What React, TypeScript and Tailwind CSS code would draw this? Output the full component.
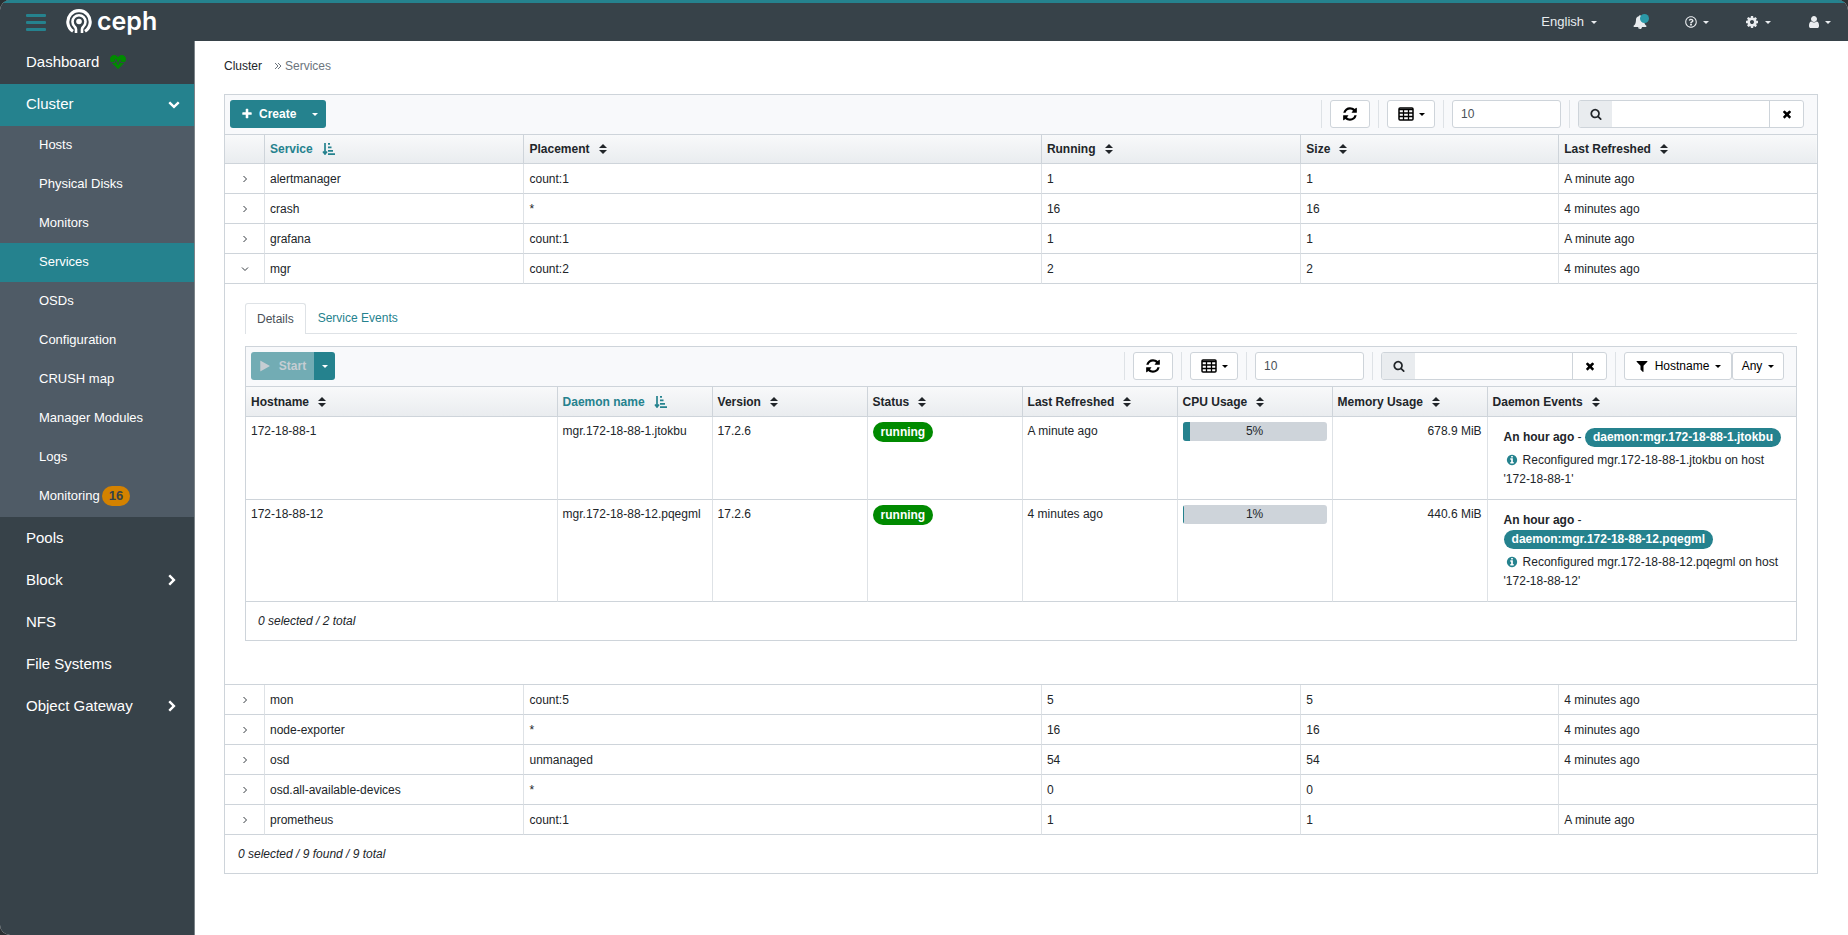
import { Fragment, useState } from "react";
import type { ReactNode } from "react";
import { FaRegQuestionCircle, FaHeartbeat } from "react-icons/fa";

const icons = {
  refresh:
    "M1639 1056q0 5-1 7-64 268-268 434.500t-478 166.500q-146 0-282.500-55t-243.500-157l-129 129q-19 19-45 19t-45-19-19-45v-448q0-26 19-45t45-19h448q26 0 45 19t19 45-19 45l-137 137q71 66 161 102t187 36q134 0 250-65t186-179q11-17 53-117 8-23 30-23h192q13 0 22.500 9.500t9.500 22.500zm25-800v448q0 26-19 45t-45 19h-448q-26 0-45-19t-19-45 19-45l138-138q-148-137-349-137-134 0-250 65t-186 179q-11 17-53 117-8 23-30 23h-199q-13 0-22.500-9.500t-9.500-22.500v-7q65-268 270-434.500t480-166.500q146 0 284 55.500t245 156.500l130-129q19-19 45-19t45 19 19 45z",
  search:
    "M1216 832q0-185-131.500-316.500t-316.500-131.500-316.500 131.500-131.500 316.500 131.500 316.500 316.500 131.500 316.500-131.500 131.500-316.500zm512 832q0 52-38 90t-90 38q-54 0-90-38l-343-342q-179 124-399 124-143 0-273.500-55.500t-225-150-150-225-55.500-273.500 55.500-273.500 150-225 225-150 273.500-55.500 273.500 55.500 225 150 150 225 55.500 273.500q0 220-124 399l343 343q37 37 37 90z",
  times:
    "M1490 1322q0 40-28 68l-136 136q-28 28-68 28t-68-28l-294-294-294 294q-28 28-68 28t-68-28l-136-136q-28-28-28-68t28-68l294-294-294-294q-28-28-28-68t28-68l136-136q28-28 68-28t68 28l294 294 294-294q28-28 68-28t68 28l136 136q28 28 28 68t-28 68l-294 294 294 294q28 28 28 68z",
  plus:
    "M1600 736v192q0 40-28 68t-68 28h-416v416q0 40-28 68t-68 28h-192q-40 0-68-28t-28-68v-416h-416q-40 0-68-28t-28-68v-192q0-40 28-68t68-28h416v-416q0-40 28-68t68-28h192q40 0 68 28t28 68v416h416q40 0 68 28t28 68z",
  play: "M1576 927l-1328 738q-23 13-39.500 3t-16.500-36v-1472q0-26 16.500-36t39.500 3l1328 738q23 13 23 31t-23 31z",
  filter:
    "M1595 295q17 41-14 70l-493 493v742q0 42-39 59-13 5-25 5-27 0-45-19l-256-256q-19-19-19-45v-486l-493-493q-31-29-14-70 17-39 59-39h1280q42 0 59 39z",
  cog: "M1152 896q0-106-75-181t-181-75-181 75-75 181 75 181 181 75 181-75 75-181zm512-109v222q0 12-8 23t-20 13l-185 28q-19 54-39 91 35 50 107 138 10 12 10 25t-9 23q-27 37-99 108t-94 71q-12 0-26-9l-138-108q-44 23-91 38-16 136-29 186-7 28-36 28h-222q-14 0-24.500-8.500t-11.500-21.500l-28-184q-49-16-90-37l-141 107q-10 9-25 9-14 0-25-11-126-114-165-168-7-10-7-23 0-12 8-23 15-21 51-66.500t54-70.500q-27-50-41-99l-183-27q-13-2-21-12.500t-8-23.500v-222q0-12 8-23t19-13l186-28q14-46 39-92-40-57-107-138-10-12-10-24 0-10 9-23 26-36 98.500-107.500t94.500-71.500q13 0 26 10l138 107q44-23 91-38 16-136 29-186 7-28 36-28h222q14 0 24.500 8.500t11.500 21.500l28 184q49 16 90 37l142-107q9-9 24-9 13 0 25 10 129 119 165 170 7 8 7 22 0 12-8 23-15 21-51 66.500t-54 70.500q26 50 41 98l183 28q13 2 21 12.500t8 23.500z",
  user: "M1536 1399q0 109-62.500 187t-150.500 78h-854q-88 0-150.500-78t-62.500-187q0-85 8.500-160.500t31.500-152 58.500-131 94-89 134.500-34.500q131 128 313 128t313-128q76 0 134.500 34.500t94 89 58.500 131 31.500 152 8.500 160.500zm-256-887q0 159-112.500 271.500t-271.500 112.500-271.500-112.500-112.500-271.500 112.500-271.500 271.500-112.500 271.500 112.500 112.500 271.500z",
  bell: "M912 1696q0-16-16-16-59 0-101.500-42.500t-42.500-101.500q0-16-16-16t-16 16q0 73 51.500 124.500t124.500 51.500q16 0 16-16zm816-288q0 52-38 90t-90 38h-448q0 106-75 181t-181 75-181-75-75-181h-448q-52 0-90-38t-38-90q50-42 91-88t85-119.500 74.500-158.500 50-206 19.500-260q0-152 117-282.500t307-158.500q-8-19-8-39 0-40 28-68t68-28 68 28 28 68q0 20-8 39 190 28 307 158.500t117 282.500q0 139 19.500 260t50 206 74.500 158.500 85 119.500 91 88z",
  info: "M1152 1376v-160q0-14-9-23t-23-9h-96v-512q0-14-9-23t-23-9h-320q-14 0-23 9t-9 23v160q0 14 9 23t23 9h96v320h-96q-14 0-23 9t-9 23v160q0 14 9 23t23 9h448q14 0 23-9t9-23zm-128-896v-160q0-14-9-23t-23-9h-192q-14 0-23 9t-9 23v160q0 14 9 23t23 9h192q14 0 23-9t9-23zm640 416q0 209-103 385.500t-279.500 279.500-385.500 103-385.500-103-279.500-279.500-103-385.500 103-385.500 279.500-279.500 385.500-103 385.500 103 279.500 279.500 103 385.500z",
  chevron:
    "M1683 808l-742 741q-19 19-45 19t-45-19l-742-741q-19-19-19-45.500t19-45.500l166-165q19-19 45-19t45 19l531 531 531-531q19-19 45-19t45 19l166 165q19 19 19 45.500t-19 45.500z",
};

const Icon = ({ name, className = "size-3" }: { name: keyof typeof icons; className?: string }) => (
  <svg viewBox="0 0 1792 1792" fill="currentColor" className={`shrink-0 ${className}`} aria-hidden="true">
    <path d={icons[name]} />
  </svg>
);

const TableIcon = () => (
  <svg viewBox="0 0 16 14" className="h-[14px] w-4 shrink-0" aria-hidden="true">
    <rect x="1" y="1" width="14" height="12" rx="1" fill="none" stroke="currentColor" strokeWidth="1.500" />
    <path d="M1 2.500h14M1 6h14M1 9.500h14M5.500 2v11M10.500 2v11" stroke="currentColor" strokeWidth="1.300" />
  </svg>
);

const SortIcon = () => (
  <svg viewBox="0 0 8 10" fill="currentColor" className="h-[10px] w-2 shrink-0" aria-hidden="true">
    <path d="M4 0l4 4H0zM4 10L0 6h8z" />
  </svg>
);

const SortAscIcon = () => (
  <svg viewBox="0 0 13 12" fill="none" stroke="currentColor" className="h-3 w-[13px] shrink-0" aria-hidden="true">
    <path d="M3 0v11M1 8.500l2 2.500 2-2.500" strokeWidth="1.700" />
    <path d="M6 .800h2M6 4.300h3.500M6 7.800h5M6 11.200h7" strokeWidth="1.700" />
  </svg>
);

const Caret = () => (
  <svg viewBox="0 0 6 3" fill="currentColor" className="h-[3px] w-[6px] shrink-0" aria-hidden="true">
    <path d="M0 0h6L3 3z" />
  </svg>
);

const Angle = ({ open }: { open: boolean }) => (
  <svg viewBox="0 0 8 8" fill="none" stroke="#343a40" className={`size-2 ${open ? "rotate-90" : ""}`} aria-hidden="true">
    <path d="M2.500 1l3 3-3 3" />
  </svg>
);

const CephLogo = () => (
  <svg viewBox="0 0 26 26" fill="none" stroke="currentColor" className="size-[26px]" aria-hidden="true">
    <path d="M7 23.300A11.200 11.200 0 1 1 19 23.300" strokeWidth="3.100" />
    <path d="M10 25v-3.800q0-1.500-1.500-2.800A6.500 6.500 0 1 1 17.500 18.400q-1.500 1.300-1.500 2.800v3.800" strokeWidth="2.600" />
    <circle cx="13" cy="13.500" r="2.800" fill="currentColor" stroke="none" />
  </svg>
);

const clusterItems = [
  "Hosts",
  "Physical Disks",
  "Monitors",
  "Services",
  "OSDs",
  "Configuration",
  "CRUSH map",
  "Manager Modules",
  "Logs",
  "Monitoring",
];

const bottomItems = [
  { label: "Pools" },
  { label: "Block", children: true },
  { label: "NFS" },
  { label: "File Systems" },
  { label: "Object Gateway", children: true },
];

const services = [
  { name: "alertmanager", placement: "count:1", running: 1, size: 1, refreshed: "A minute ago" },
  { name: "crash", placement: "*", running: 16, size: 16, refreshed: "4 minutes ago" },
  { name: "grafana", placement: "count:1", running: 1, size: 1, refreshed: "A minute ago" },
  { name: "mgr", placement: "count:2", running: 2, size: 2, refreshed: "4 minutes ago" },
  { name: "mon", placement: "count:5", running: 5, size: 5, refreshed: "4 minutes ago" },
  { name: "node-exporter", placement: "*", running: 16, size: 16, refreshed: "4 minutes ago" },
  { name: "osd", placement: "unmanaged", running: 54, size: 54, refreshed: "4 minutes ago" },
  { name: "osd.all-available-devices", placement: "*", running: 0, size: 0, refreshed: "" },
  { name: "prometheus", placement: "count:1", running: 1, size: 1, refreshed: "A minute ago" },
];

const daemons = [
  { host: "172-18-88-1", name: "mgr.172-18-88-1.jtokbu", refreshed: "A minute ago", cpu: 5, memory: "678.9 MiB" },
  { host: "172-18-88-12", name: "mgr.172-18-88-12.pqegml", refreshed: "4 minutes ago", cpu: 1, memory: "440.6 MiB" },
];

const Header = () => (
  <header className="flex h-[41px] items-center border-t-[3px] border-[#25828e] bg-[#374249] text-[13px] text-[#e9ecef]">
    <button aria-label="Toggle navigation" className="ml-[26px] flex w-5 flex-col gap-1 text-[#25828e]">
      <span className="h-[3px] rounded-[1px] bg-current" />
      <span className="h-[3px] rounded-[1px] bg-current" />
      <span className="h-[3px] rounded-[1px] bg-current" />
    </button>
    <a href="#" className="ml-5 flex items-center gap-[5px] pb-[2px] text-white">
      <CephLogo />
      <span className="font-['Inter',sans-serif] text-[25px] leading-7 font-semibold">ceph</span>
    </a>
    <div className="ml-auto flex items-center pr-[17px]">
      <button className="flex items-center gap-[7px]">
        English <Caret />
      </button>
      <button aria-label="Notifications" className="relative ml-9">
        <Icon name="bell" className="size-[14px]" />
        <span className="absolute -top-px -right-[2px] size-[9px] rounded-full bg-[#2b99a8]" />
      </button>
      <button aria-label="Help" className="ml-[38px] flex items-center gap-[6px]">
        <FaRegQuestionCircle className="size-3" /> <Caret />
      </button>
      <button aria-label="Settings" className="ml-9 flex items-center gap-[6px]">
        <Icon name="cog" className="size-[14px]" /> <Caret />
      </button>
      <button aria-label="User" className="ml-9 flex items-center gap-1">
        <Icon name="user" className="size-[14px]" /> <Caret />
      </button>
    </div>
  </header>
);

const Sidebar = () => (
  <nav className="w-[195px] shrink-0 border-r border-[#7b8388] bg-[#374249] text-[15px] text-white">
    <a href="#" className="flex h-[43px] items-center gap-[11px] pb-[2px] pl-[26px]">
      Dashboard <FaHeartbeat className="size-4 text-[#008a00]" />
    </a>
    <button className="flex h-[42px] w-full items-center justify-between bg-[#25828e] pr-[14px] pb-[2px] pl-[26px]">
      Cluster <Icon name="chevron" />
    </button>
    <ul className="bg-[#4f5b66] pb-px text-[13px]">
      {clusterItems.map(item => (
        <li key={item}>
          <a
            href="#"
            className={`flex h-[39px] items-center gap-[2px] pb-[2px] pl-[39px] ${item === "Services" ? "bg-[#25828e]" : ""}`}
          >
            {item}
            {item === "Monitoring" && (
              <span className="flex h-5 items-center rounded-full bg-[#d48200] px-[7px] font-bold text-[#374249]">16</span>
            )}
          </a>
        </li>
      ))}
    </ul>
    <ul>
      {bottomItems.map(item => (
        <li key={item.label}>
          <a href="#" className="flex h-[42px] items-center justify-between pr-[17px] pl-[26px]">
            {item.label}
            {item.children && <Icon name="chevron" className="size-3 -rotate-90" />}
          </a>
        </li>
      ))}
    </ul>
  </nav>
);

const Section = ({ children }: { children: ReactNode }) => (
  <div className="flex h-7 items-center border-l border-[#dee2e6] px-2">{children}</div>
);

const outlineButton = "flex h-7 items-center justify-center rounded-[3px] border border-[#ced4da] bg-white text-black";

const TableTools = ({ id, children }: { id: string; children?: ReactNode }) => (
  <div className="ml-auto flex pr-1">
    <Section>
      <button aria-label="Refresh" className={`w-10 ${outlineButton}`}>
        <Icon name="refresh" className="size-4" />
      </button>
    </Section>
    <Section>
      <button aria-label="Columns" className={`w-12 gap-[5px] ${outlineButton}`}>
        <TableIcon /> <Caret />
      </button>
    </Section>
    <Section>
      <input
        aria-label="Rows per page"
        defaultValue="10"
        className="h-7 w-[109px] rounded-[3px] border border-[#ced4da] bg-white px-2 text-[#495057]"
      />
    </Section>
    <Section>
      <div className="flex h-7 w-[226px] overflow-hidden rounded-[3px] border border-[#ced4da] bg-white">
        <label htmlFor={id} className="flex w-[33px] items-center justify-center bg-[#e9ecef]">
          <Icon name="search" />
        </label>
        <input id={id} aria-label="Search" className="min-w-0 flex-1 px-2 outline-none" />
        <button aria-label="Clear search" className="flex w-[34px] items-center justify-center border-l border-[#ced4da] text-black">
          <Icon name="times" />
        </button>
      </div>
    </Section>
    {children}
  </div>
);

const HeadCell = ({ label, sorted, className = "" }: { label: string; sorted?: boolean; className?: string }) => (
  <th
    aria-sort={sorted ? "ascending" : undefined}
    className={`border-r border-b border-[#ced4da] px-[5px] text-left font-bold last:border-r-0 ${className}`}
  >
    <button className={`flex items-center gap-[9px] ${sorted ? "text-[#25828e]" : ""}`}>
      {label} {sorted ? <SortAscIcon /> : <SortIcon />}
    </button>
  </th>
);

const headRow = "bg-linear-to-b from-[#f8f9fa] to-[#e9ecef]";
const cell = "border-r border-b border-r-[#dee2e6] border-b-[#ced4da] px-[5px] last:border-r-0";

const DaemonTable = () => (
  <div className="border border-[#ced4da]">
    <div className="flex h-10 border-b border-[#ced4da] bg-[#f8f9fb] pt-[5px] pl-[5px]">
      <div className="flex h-7 font-bold text-white">
        <button disabled className="flex w-[63px] items-center justify-center gap-2 rounded-l-[3px] bg-[#72acb4] text-[#c5cdd2]">
          <Icon name="play" /> Start
        </button>
        <button aria-label="More actions" className="flex w-[21px] items-center justify-center rounded-r-[3px] bg-[#25828e]">
          <Caret />
        </button>
      </div>
      <TableTools id="daemon-search">
        <div className="flex border-l border-[#dee2e6] pr-2 pl-2">
          <button className={`w-[108px] gap-[6px] ${outlineButton}`}>
            <Icon name="filter" className="size-[14px]" /> Hostname <Caret />
          </button>
          <button className={`w-[52px] gap-[6px] ${outlineButton}`}>
            Any <Caret />
          </button>
        </div>
      </TableTools>
    </div>
    <table className="w-full table-fixed border-separate border-spacing-0">
      <thead>
        <tr className={`h-[30px] ${headRow}`}>
          <HeadCell label="Hostname" className="w-[20.1%]" />
          <HeadCell label="Daemon name" sorted />
          <HeadCell label="Version" />
          <HeadCell label="Status" />
          <HeadCell label="Last Refreshed" />
          <HeadCell label="CPU Usage" />
          <HeadCell label="Memory Usage" />
          <HeadCell label="Daemon Events" className="w-[19.9%]" />
        </tr>
      </thead>
      <tbody className="align-top leading-5">
        {daemons.map(daemon => (
          <tr key={daemon.host}>
            <td className={`pt-1 ${cell}`}>{daemon.host}</td>
            <td className={`pt-1 whitespace-nowrap ${cell}`}>{daemon.name}</td>
            <td className={`pt-1 ${cell}`}>17.2.6</td>
            <td className={`pt-[5px] ${cell}`}>
              <span className="inline-block h-5 rounded-full bg-[#008a00] px-2 align-top font-bold text-white">running</span>
            </td>
            <td className={`pt-1 ${cell}`}>{daemon.refreshed}</td>
            <td className={`pt-[5px] ${cell}`}>
              <div className="relative h-[19px] overflow-hidden rounded-[3px] bg-[#ced4da] text-center leading-[19px]">
                <div className="absolute inset-y-0 left-0 bg-[#25828e]" style={{ width: `${daemon.cpu}%` }} />
                <span className="relative">{`${daemon.cpu}%`}</span>
              </div>
            </td>
            <td className={`pt-1 text-right ${cell}`}>{daemon.memory}</td>
            <td className={`pt-[11px] pb-[10px] leading-[19px] ${cell}`}>
              <div className="pr-[6px] pl-[11px]">
                <p className="mb-1">
                  <b>An hour ago</b> -{" "}
                  <span className="inline-block rounded-full bg-[#25828e] px-2 align-top font-bold text-white">
                    {`daemon:${daemon.name}`}
                  </span>
                </p>
                <p>
                  <Icon name="info" className="mr-[5px] ml-[2px] inline size-3 align-[-2px] text-[#25828e]" />
                  {`Reconfigured ${daemon.name} on host '${daemon.host}'`}
                </p>
              </div>
            </td>
          </tr>
        ))}
      </tbody>
    </table>
    <div className="flex h-[38px] items-center pl-3 italic">0 selected / 2 total</div>
  </div>
);

const ServiceDetails = () => (
  <div className="px-5 pt-[19px] pb-[43px]">
    <div role="tablist" className="mb-3 flex h-[31px] border-b border-[#dee2e6]">
      <button
        role="tab"
        aria-selected="true"
        className="-mb-px rounded-t-[3px] border border-b-0 border-[#dee2e6] bg-white px-[11px] text-[#495057]"
      >
        Details
      </button>
      <button role="tab" aria-selected="false" className="px-3 text-[#25828e]">
        Service Events
      </button>
    </div>
    <DaemonTable />
  </div>
);

export default function App() {
  const [expanded, setExpanded] = useState("mgr");

  return (
    <div className="bg-[#2b3033] font-['Liberation_Sans',Arial,sans-serif] text-[12px] leading-[18px] text-[#212529]">
      <div className="flex min-h-screen flex-col overflow-hidden rounded-t-[10px] rounded-bl-[10px] bg-white">
        <Header />
        <div className="flex flex-1">
          <Sidebar />
          <main className="min-w-0 flex-1 pr-[30px] pl-[29px]">
            <nav aria-label="Breadcrumb" className="mt-4 mb-[19px] flex items-center">
              <a href="#">Cluster</a>
              <svg viewBox="0 0 8 8" fill="none" stroke="#6c757d" className="mr-[3px] ml-3 size-2" aria-hidden="true">
                <path d="M1 1l3 3-3 3M4 1l3 3-3 3" />
              </svg>
              <span className="text-[#6c757d]">Services</span>
            </nav>

            <div className="border border-[#ced4da]">
              <div className="flex h-10 border-b border-[#ced4da] bg-[#f8f9fb] pt-[5px] pl-[5px]">
                <div className="flex h-7 overflow-hidden rounded-[3px] bg-[#25828e] font-bold text-white">
                  <button className="flex w-[74px] items-center gap-[6px] pl-[11px]">
                    <Icon name="plus" /> Create
                  </button>
                  <button aria-label="More actions" className="flex w-[22px] items-center justify-center">
                    <Caret />
                  </button>
                </div>
                <div className="ml-auto flex pr-[1px]">
                  <TableTools id="service-search" />
                </div>
              </div>
              <table className="w-full table-fixed border-separate border-spacing-0">
                <thead>
                  <tr className={`h-[29px] ${headRow}`}>
                    <th aria-label="Expand" className="w-10 border-r border-b border-[#ced4da]" />
                    <HeadCell label="Service" sorted className="w-[16.3%]" />
                    <HeadCell label="Placement" className="w-[32.5%]" />
                    <HeadCell label="Running" className="w-[16.3%]" />
                    <HeadCell label="Size" className="w-[16.2%]" />
                    <HeadCell label="Last Refreshed" />
                  </tr>
                </thead>
                <tbody>
                  {services.map(service => (
                    <Fragment key={service.name}>
                      <tr className="h-[30px]">
                        <td className={cell}>
                          <button
                            aria-label={`Toggle ${service.name}`}
                            aria-expanded={expanded === service.name}
                            onClick={() => setExpanded(expanded === service.name ? "" : service.name)}
                            className="flex w-full justify-center"
                          >
                            <Angle open={expanded === service.name} />
                          </button>
                        </td>
                        <td className={cell}>{service.name}</td>
                        <td className={cell}>{service.placement}</td>
                        <td className={cell}>{service.running}</td>
                        <td className={cell}>{service.size}</td>
                        <td className={cell}>{service.refreshed}</td>
                      </tr>
                      {expanded === service.name && (
                        <tr>
                          <td colSpan={6} className="border-b border-[#ced4da]">
                            <ServiceDetails />
                          </td>
                        </tr>
                      )}
                    </Fragment>
                  ))}
                </tbody>
              </table>
              <div className="flex h-[38px] items-center pl-[13px] italic">0 selected / 9 found / 9 total</div>
            </div>
          </main>
        </div>
      </div>
    </div>
  );
}
